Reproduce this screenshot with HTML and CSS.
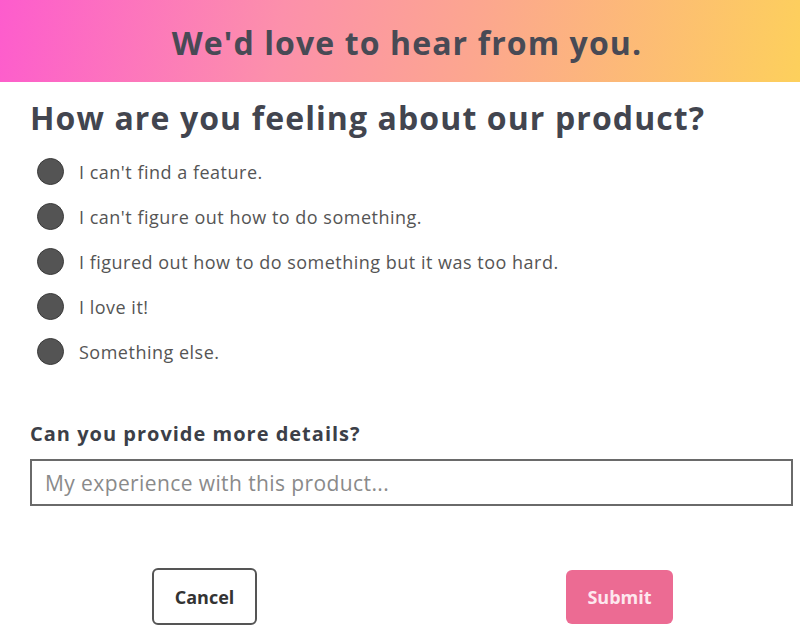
FILE: index.html
```html
<!DOCTYPE html>
<html>
<head>
<meta charset="utf-8">
<link rel="stylesheet" href="styles.css">
</head>
<body>
<header class="banner">
  <h1 class="banner-title">We'd love to hear from you.</h1>
</header>
<main class="form">
  <h2 class="question">How are you feeling about our product?</h2>
  <ul class="options">
    <li class="option"><span class="dot"></span><span class="label">I can't find a feature.</span></li>
    <li class="option"><span class="dot"></span><span class="label">I can't figure out how to do something.</span></li>
    <li class="option"><span class="dot"></span><span class="label">I figured out how to do something but it was too hard.</span></li>
    <li class="option"><span class="dot"></span><span class="label">I love it!</span></li>
    <li class="option"><span class="dot"></span><span class="label">Something else.</span></li>
  </ul>
  <h3 class="details-title">Can you provide more details?</h3>
  <div class="input">My experience with this product...</div>
  <div class="actions">
    <button class="btn btn-cancel">Cancel</button>
    <button class="btn btn-submit">Submit</button>
  </div>
</main>
</body>
</html>
```
FILE: styles.css
```css
* { box-sizing: border-box; }
html, body { margin: 0; padding: 0; background: #fff; }
body {
  width: 800px;
  height: 637px;
  overflow: hidden;
  font-family: "Open Sans", "Noto Sans", sans-serif;
}
.banner {
  height: 82px;
  background: linear-gradient(100deg, #fd5ccd 0%, #fc90ab 35%, #fca78e 60%, #fdd05c 100%);
  display: flex;
  align-items: center;
  justify-content: center;
}
.banner-title {
  margin: 0;
  font-size: 32px;
  letter-spacing: 1.1px;
  font-weight: 700;
  color: #484a55;
  padding-left: 14px;
  padding-top: 2px;
}
.form {
  padding: 15px 7px 0 30px;
}
.question {
  margin: 0;
  font-size: 32px;
  letter-spacing: 1.1px;
  font-weight: 700;
  color: #42454f;
  line-height: 42px;
}
.options {
  list-style: none;
  margin: 10px 0 0 0;
  padding: 0;
}
.option {
  display: flex;
  align-items: center;
  height: 45px;
}
.dot {
  width: 27px;
  height: 27px;
  border-radius: 50%;
  background: #545454;
  border: 1px solid #3a3a3a;
  margin-left: 7px;
  margin-right: 15px;
  flex: none;
}
.label {
  font-size: 18px;
  letter-spacing: 0.5px;
  color: #555;
}
.details-title {
  margin: 47px 0 0 0;
  font-size: 20px;
  letter-spacing: 1px;
  font-weight: 700;
  color: #3c3f48;
  line-height: 26px;
}
.input {
  margin-top: 12px;
  height: 47px;
  border: 2px solid #6a6a6a;
  padding-left: 13px;
  display: flex;
  align-items: center;
  font-size: 21px;
  letter-spacing: 0.4px;
  color: #8a8a8a;
}
.actions {
  display: flex;
  justify-content: space-between;
  padding: 62px 120px 0 122px;
  align-items: center;
}
.btn {
  font-family: "Open Sans", "Noto Sans", sans-serif;
  font-size: 18px;
  font-weight: 700;
  border-radius: 6px;
  cursor: pointer;
}
.btn-cancel {
  width: 105px;
  height: 57px;
  background: #fff;
  border: 2px solid #555;
  color: #333;
}
.btn-submit {
  width: 107px;
  height: 54px;
  background: #ec6b93;
  border: none;
  color: #fde8ee;
}
```
